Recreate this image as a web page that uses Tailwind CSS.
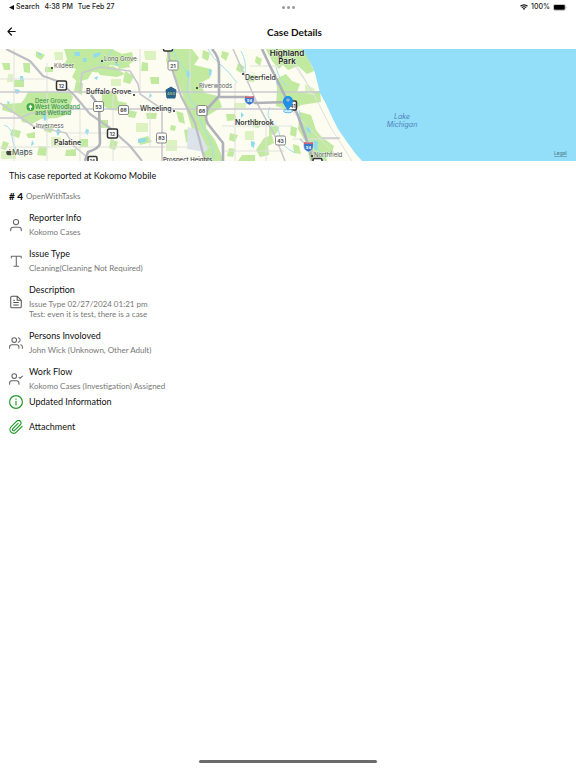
<!DOCTYPE html>
<html lang="en">
<head>
    <meta charset="UTF-8">
    <meta name="viewport" content="width=device-width, initial-scale=1.0">
    <title>Case Details</title>
    <script src="https://cdn.jsdelivr.net/npm/@tailwindcss/browser@4"></script>
</head>
<body class="bg-white min-h-screen flex flex-col font-[Lato,sans-serif] text-[#111]">
    <!-- Status bar -->
    <div class="grid grid-cols-3 items-center h-[14px] px-[9px] font-[Inter,sans-serif] font-medium text-[7px] leading-[14px] text-[#222]">
        <div class="flex items-center">
            <svg class="w-[5px] h-[5px] mr-[2px]" viewBox="0 0 5 5"><path d="M0 2.5 5 0v5z" fill="#111"/></svg>
            <a href="#">Search</a>
            <span class="ml-[5px]">4:38 PM</span>
            <span class="ml-[5px]">Tue Feb 27</span>
        </div>
        <div class="flex justify-center gap-[2px]">
            <span class="size-[3px] rounded-full bg-[#999]"></span>
            <span class="size-[3px] rounded-full bg-[#999]"></span>
            <span class="size-[3px] rounded-full bg-[#999]"></span>
        </div>
        <div class="flex items-center justify-end gap-[3px]">
            <svg class="w-[8px] h-[6px]" viewBox="0 0 16 12" fill="none" stroke="#111" stroke-width="2.4"><path d="M1 4.5a10 10 0 0 1 14 0M3.6 7.3a6.2 6.2 0 0 1 8.8 0"/><path d="m8 12-2.6-2.8a3.8 3.8 0 0 1 5.2 0z" fill="#111" stroke="none"/></svg>
            <span>100%</span>
            <svg class="w-[14px] h-[7px]" viewBox="0 0 14 7"><rect x=".4" y=".4" width="12" height="6" rx="1.6" fill="none" stroke="#999" stroke-width=".6"/><rect x="1" y="1" width="10.8" height="4.8" rx="1" fill="#000"/><path d="M13 2.4q1 1 0 2z" fill="#999"/></svg>
        </div>
    </div>

    <!-- Header -->
    <header class="flex items-center h-[35px] px-[7px]">
        <button type="button" aria-label="Back" class="size-[9px] shrink-0">
            <svg class="size-full" viewBox="0 0 9 9" fill="none" stroke="#111" stroke-width="1.2" stroke-linecap="round" stroke-linejoin="round"><path d="M8.2 4.5H1M4.4 1 1 4.5 4.4 8"/></svg>
        </button>
        <h1 class="grow pl-1 text-center text-[10px] leading-[14px] font-bold">Case Details</h1>
    </header>

    <!-- Map -->
    <svg class="w-full h-[112px] shrink-0" viewBox="0 0 576 112" preserveAspectRatio="xMidYMid slice" font-family="Inter, sans-serif">
        <rect width="576" height="112" fill="#fcfdf0"/>
        <!-- parks -->
        <g fill="#c2e9a0">
            <path d="M64 0h48l10 5 10-2 2 9-9 6-15-2-6 8-12-1-4 7-10 3-6-5 4-8-12-4 3-6z"/>
            <path d="M28 43h42l3 5-3 9 2 7-15 5-16 1-9 5-10-2-3-7-17-5 1-6 18-1 4-5z"/>
            <path d="M168 0h24l7 9-5 7 17 4-1 9-10 5 5 10 13 3 4 11-15 9-1 12 9 12 6 14 2 7h-17l-4-14-10-18-5-17-5-19-9-21-7-11z"/>
            <path d="M102 43h14l2 9 9 2-3 8-14-1-8-5zM76 32l7 2-1 12-8-4z"/>
            <path d="M266 0h38l10 22-7 3-9-8-10 4-5-5-4 4-7-8zM276 30l10-5 6 7 8 3-3 8 23-1 1 11-20 3-9 6-16-5 1-17z"/>
            <path d="M300 63l11 3 5 15 9 11 2 20h-17l-4-18-8-14z"/>
            <path d="M264 89l8-3 2 8-6 3 1 9-9 2-4-7zM242 106h13v6h-17zM269 75l10 3-2 6-8 3zM253 70l8 2-2 7-6-1zM322 88l12 9-3 10-6-2z"/>
            <path d="M23 14h7v10l-6-1zM36 2l9 4-4 5-5-3zM2 14h8v7H4zM14 31h10v7H14zM45 18h8v5h-8zM96 19l17-2 12 8-8 3-17-2zM115 12l12-3 3 9-11 2z"/>
            <path d="M12 80l9 2-2 7-9-3zM26 85l9-2v6h-7zM45 76l9 2-3 6-7-2zM79 90h9v8h-8zM66 101l10-1v7H65zM39 97l8 1-1 9-9-1zM3 92l6 2-3 7-5-1zM111 90l7 3-3 8-6-2zM101 71h7v8h-7z"/>
            <path d="M129 61l8 2-2 6-7-1zM138 90l10-3 4 6-12 3zM146 64h11l-1 6h-9zM125 22l9 5-4 8-7-2zM142 13l6 1v8h-7zM176 62l7 2 2 11-6-2zM184 81l6-1 3 14-7-1zM171 76l5 1-1 5-5-1zM150 28h9v7h-8z"/>
            <path d="M203 1l7 3-2 8-6-3zM222 2l7 2-3 8-5-4zM226 65h9l2 6-10 1zM230 84l8 2-3 7-6-2zM238 14l7 4-4 6-5-3zM229 99l6 1-2 8-6-1zM248 26h8l-2 7-7-1zM256 7l6 3-2 7-5-4zM291 77l6 2-1 9-6-2zM293 95l6 2 2 8-7-1z"/>
        </g>
        <g fill="#ddf2c1">
            <path d="M1 102h15v8H1zM51 88h10v9H51zM54 3h9v8h-8zM144 2h12v9h-11zM136 74h12v9h-12zM166 91h11v11h-11zM234 54h12v5h-12zM245 82h9v9h-9zM111 30h10v7h-10zM8 25h5v8H7zM305 35l10 5-2 6-8-2z"/>
        </g>
        <!-- airport -->
        <path d="M188 78l11 3 9 19-3 3-18-3z" fill="#dce3ed"/>
        <!-- creeks and ponds -->
        <g fill="none" stroke="#a5e0ef" stroke-width="1">
            <path d="M173 0q3 11 10 18t5 17 4 18 7 14 9 20 3 25M208 0q5 10 13 16t16 18M241 2q6 11 4 22M276 18q3 13 11 19M299 61q2 19 12 30t12 21M4 76q8 3 8 11t8 20M113 0q-5 10-14 16M270 58q-5 9 2 15t8 15 15 16M60 55q5 5 3 10"/>
        </g>
        <g fill="#91dbee">
            <path d="M74 3h6v4h-5zM93 5l8-2-2 4-5 2zM83 9h4l-1 4h-3zM20 27h3l1 5-4-1zM37 3l5 2-2 2zM15 40l5 1-2 4-3-1zM58 79l3 3-3 5-2-4zM43 66l3-1 1 6-3 1zM32 91l2 4-3 2zM94 29l4-2-1 4zM115 13l4 3-3 1zM138 90l9-1-2 4-7 1zM188 21l3 4-2 4-3-3zM209 20l3 1-1 6-2-1zM241 63l3 3-3 3zM276 33h4l1 4-4-1zM306 76l4 3 1 6-4-3zM314 91l4 2-1 9-3-3zM86 80l3 1-1 5-3-2zM7 52l3 1-2 3zM150 44l2 3-3 2zM24 100l4 2-4 3zM251 92l4 1-1 6-3-2z"/>
        </g>
        <!-- lake -->
        <path d="M302 0l5 8 5 9 3 7 2 8 3 12 6 11 6 13 6 12 9 13 8 11 7 8H576V0z" fill="#93dff9"/>
        <!-- minor roads -->
        <g fill="none" stroke="#e0e1de" stroke-width="1">
            <path d="M14 0v112M47 14v98M0 98h165M80 60v52M0 30h45M140 0v45M113 44v68M120 98h90M235 34v78M190 0v45M222 77h70M224 102h60M250 17h32M290 60l40 40M283 0l28 40 20 39 21 33M292 8l24 42M293 90h45M266 70v42M150 60v38M66 84h50"/>
        </g>
        <!-- main roads -->
        <g fill="none" stroke="#c9c9cf" stroke-width="1.6" stroke-linejoin="round">
            <path d="M0 43h320M0 69h20l12-5 25-1 18-3h215M0 54l33 23 33 7 8 13 14 12M80 42l2-18 18-6 30 4 8 13 2 10 22 15v52M233 0l17 38 7 16 18 33 10 25M300 90l22 22M322 89h18"/>
            <path d="M168 0l2 14 11 33 14 27 10 38" stroke-width="2.3" stroke="#bdbec5"/>
            <path d="M6 0l24 12 13 15 17 6 15 14 15 18 20 14 20 18 12 15" stroke-width="2.2" stroke="#bdbec5"/>
        </g>
        <g fill="none" stroke="#afb1b9" stroke-width="2.600" stroke-linejoin="round">
            <path d="M91 46l8 11 1 37q0 5-12 9l-3 9M212 0q7 8 7 17v30l-11 12q-4 10 0 16l15 19v18M219 48h29l7 6 33-1M262 0l8 17 15 30 12 17 11 31 5 17"/>
        </g>
        <!-- route shields -->
        <g font-size="5" font-weight="700" text-anchor="middle" fill="#444">
            <g fill="#fff" stroke="#888" stroke-width="1">
                <rect x="93.500" y="52.500" width="10" height="10" rx="1.500"/>
                <rect x="118.500" y="56.500" width="10" height="9" rx="1.500"/>
                <rect x="168" y="12" width="10" height="9" rx="1.500"/>
                <rect x="156.500" y="84" width="10" height="10" rx="1.500"/>
                <rect x="197" y="56.500" width="10" height="10" rx="1.500"/>
                <rect x="275.500" y="87" width="10" height="9" rx="1.500"/>
                <g stroke="#333" stroke-width="1.500">
                    <rect x="56.500" y="32" width="10" height="9" rx="1.500"/>
                    <rect x="107.500" y="80" width="10" height="9" rx="1.500"/>
                    <rect x="88" y="107.500" width="9" height="9" rx="1.500"/>
                    <rect x="163.500" y="-7" width="9" height="9" rx="1.500"/>
                    <rect x="287.500" y="52" width="9" height="9" rx="1.500"/>
                    <rect x="313" y="109.500" width="9" height="9" rx="1.500"/>
                </g>
            </g>
            <text x="61.500" y="38.500">12</text>
            <text x="112.500" y="86.500">12</text>
            <text x="92.500" y="114">14</text>
            <text x="98.500" y="59.500">53</text>
            <text x="123.500" y="63">68</text>
            <text x="173" y="18.500">21</text>
            <text x="161.500" y="91">83</text>
            <text x="202" y="63.500">68</text>
            <text x="280.500" y="93.500">43</text>
            <text x="293" y="59">41</text>
            <path d="M166 41l5-3 5 3-1 8h-8z" fill="#28628c" stroke="#28628c"/>
            <text x="171" y="46" fill="#9fb779" font-size="4">A50</text>
            <g fill="#3977c6" stroke="#fff" stroke-width=".5">
                <path d="M245 47q4 1 9 0 2 7-4.500 9Q243 54 245 47zM304 93q5 1 9 0 2 8-4.500 10Q302 101 304 93z"/>
            </g>
            <path d="M245 47q4 1 9 0v2h-9zM304 93q5 1 9 0v2h-9z" fill="#d16074"/>
            <text x="249.500" y="53" fill="#fff" font-size="4">94</text>
            <text x="308.500" y="99.500" fill="#fff" font-size="4">94</text>
        </g>
        <!-- place names -->
        <g fill="#555" stroke="#fff" stroke-width="1" stroke-opacity=".6" paint-order="stroke" font-size="6">
            <text x="54" y="19">Kildeer</text>
            <text x="104" y="12">Long Grove</text>
            <text x="199" y="39">Riverwoods</text>
            <text x="36" y="79">Inverness</text>
            <text x="314" y="108">Northfield</text>
            <g fill="#333" font-size="7" font-weight="500">
                <text x="86" y="45">Buffalo Grove</text>
                <text x="140" y="62">Wheeling</text>
                <text x="245" y="31">Deerfield</text>
                <text x="54" y="96" font-weight="600">Palatine</text>
                <text x="235" y="76" font-weight="600">Northbrook</text>
                <text x="163" y="113" font-size="6">Prospect Heights</text>
            </g>
            <g fill="#222" font-size="8" font-weight="600" text-anchor="middle">
                <text x="287" y="7">Highland</text>
                <text x="287" y="15">Park</text>
            </g>
        </g>
        <g fill="#37924a" font-size="6" font-weight="500">
            <text x="35" y="54">Deer Grove</text>
            <text x="35" y="60">West Woodland</text>
            <text x="35" y="66">and Wetland</text>
        </g>
        <g fill="#222">
            <circle cx="52" cy="19" r="1"/><circle cx="102" cy="12" r="1"/><circle cx="134" cy="46" r="1"/><circle cx="174" cy="62" r="1"/><circle cx="197" cy="39" r="1"/><circle cx="243" cy="25" r="1"/><circle cx="34" cy="79" r="1"/><circle cx="312" cy="107" r="1"/>
        </g>
        <circle cx="30.500" cy="58" r="4" fill="#42a842"/>
        <path d="M30.500 55.500l2 2.500-1.500 1v2h-1v-2l-1.500-1z" fill="#fff"/>
        <!-- case location -->
        <ellipse cx="288" cy="62" rx="4.500" ry="1.800" fill="#c7edfa" stroke="#48a9e5" stroke-width=".8"/>
        <path d="M288 62c-1-4-5-5-5-10a5 5 0 0 1 10 0c0 5-4 6-5 10z" fill="#218ee8"/>
        <circle cx="288" cy="51" r="1.800" fill="#95b5c9"/>
        <g fill="#527fbd" font-size="7" font-style="italic" text-anchor="middle">
            <text x="402" y="70">Lake</text>
            <text x="402" y="78">Michigan</text>
        </g>
        <path d="M9.200 101.500q0-1.500 1.200-2 .1 1.500-1.200 2zM11.500 105q-1.500-1.200 0-2.600-1.200-1.200-2.500-.4-3-1-2.800 1.800.5 3.200 2.800 2.300 2 .9 2.500-1.100z" fill="#444"/>
        <text x="12" y="106" font-size="8" fill="#555">Maps</text>
        <a href="#"><text x="554" y="106" font-size="5" fill="#49717f" text-decoration="underline">Legal</text></a>
    </svg>

    <!-- Case -->
    <main class="px-[9px] pt-2">
        <p class="text-[9px] leading-[14px]">This case reported at Kokomo Mobile</p>
        <p class="mt-[6px] flex items-center gap-[3px] leading-[14px]">
            <span class="text-[10px] font-black"># 4</span>
            <span class="text-[8px] text-[#777]">OpenWithTasks</span>
        </p>

        <ul class="mt-2 flex flex-col gap-[10px]">
            <li class="flex items-center gap-[6px]">
                <svg class="size-[14px] mt-[2px] shrink-0" viewBox="0 0 24 24" fill="none" stroke="#666" stroke-width="1.8" stroke-linecap="round" stroke-linejoin="round"><circle cx="12" cy="7" r="4.500"/><path d="M3 22v-2a4 4 0 0 1 4-4h10a4 4 0 0 1 4 4v2"/></svg>
                <div>
                    <h2 class="text-[9px] leading-[14px]">Reporter Info</h2>
                    <p class="mt-[2px] text-[8px] leading-[10px] text-[#777]">Kokomo Cases</p>
                </div>
            </li>
            <li class="flex items-center gap-[6px]">
                <svg class="size-[14px] mt-[2px] shrink-0" viewBox="0 0 24 24" fill="none" stroke="#666" stroke-width="1.8" stroke-linecap="round" stroke-linejoin="round"><path d="M4 7V4h17v3M12.500 4v17M8.500 21h8"/></svg>
                <div>
                    <h2 class="text-[9px] leading-[14px]">Issue Type</h2>
                    <p class="mt-[2px] text-[8px] leading-[10px] text-[#777]">Cleaning(Cleaning Not Required)</p>
                </div>
            </li>
            <li class="flex items-center gap-[6px]">
                <svg class="size-[14px] mt-[2px] shrink-0" viewBox="0 0 24 24" fill="none" stroke="#555" stroke-width="1.8" stroke-linecap="round" stroke-linejoin="round"><path d="M14 2H5a2 2 0 0 0-2 2v16a2 2 0 0 0 2 2h14a2 2 0 0 0 2-2V9zM14 2v7h7M8 13h8M8 17h8M8 9h1.500"/></svg>
                <div>
                    <h2 class="text-[9px] leading-[14px]">Description</h2>
                    <p class="mt-[2px] text-[8px] leading-[10px] text-[#777]">Issue Type 02/27/2024 01:21 pm<br>Test: even it is test, there is a case</p>
                </div>
            </li>
            <li class="flex items-center gap-[6px]">
                <svg class="size-[14px] mt-[2px] shrink-0" viewBox="0 0 24 24" fill="none" stroke="#666" stroke-width="1.8" stroke-linecap="round" stroke-linejoin="round"><circle cx="9" cy="7" r="4"/><path d="M1 21v-2a4 4 0 0 1 4-4h8a4 4 0 0 1 4 4v2M16 3.100a4 4 0 0 1 0 7.800M20 15.100a4 4 0 0 1 3 3.900v2"/></svg>
                <div>
                    <h2 class="text-[9px] leading-[14px]">Persons Involoved</h2>
                    <p class="mt-[2px] text-[8px] leading-[10px] text-[#777]">John Wick (Unknown, Other Adult)</p>
                </div>
            </li>
            <li class="flex items-center gap-[6px]">
                <svg class="size-[14px] mt-[2px] shrink-0" viewBox="0 0 24 24" fill="none" stroke="#666" stroke-width="1.8" stroke-linecap="round" stroke-linejoin="round"><circle cx="9" cy="7" r="4"/><path d="M1 21v-2a4 4 0 0 1 4-4h8a4 4 0 0 1 4 4v2M17 9l2 2 4-4"/></svg>
                <div>
                    <h2 class="text-[9px] leading-[14px]">Work Flow</h2>
                    <p class="mt-[2px] text-[8px] leading-[10px] text-[#777]">Kokomo Cases (Investigation) Assigned</p>
                </div>
            </li>
        </ul>

        <div class="mt-1 flex flex-col items-start gap-[11px]">
            <button type="button" class="flex items-center gap-[6px] text-[9px] leading-[14px]">
                <svg class="size-[14px]" viewBox="0 0 24 24" fill="none" stroke="#1f9a2b" stroke-width="2" stroke-linecap="round"><circle cx="12" cy="12" r="11"/><path d="M12 11v6M12 7.200v.3"/></svg>
                Updated Information
            </button>
            <button type="button" class="flex items-center gap-[6px] text-[9px] leading-[14px]">
                <svg class="size-[14px]" viewBox="0 0 24 24" fill="none" stroke="#1f9a2b" stroke-width="2" stroke-linecap="round" stroke-linejoin="round"><path d="m22.500 11-9.800 9.900a6.500 6.500 0 0 1-9.200-9.200L13.300 2a4.300 4.300 0 0 1 6.100 6.100l-9.800 9.800a2.100 2.100 0 0 1-3-3l9-9"/></svg>
                Attachment
            </button>
        </div>
    </main>

    <!-- Home indicator -->
    <div class="mt-auto mx-auto mb-[5px] w-[31%] h-[3px] rounded-full bg-[#6b6b6b]"></div>
</body>
</html>
